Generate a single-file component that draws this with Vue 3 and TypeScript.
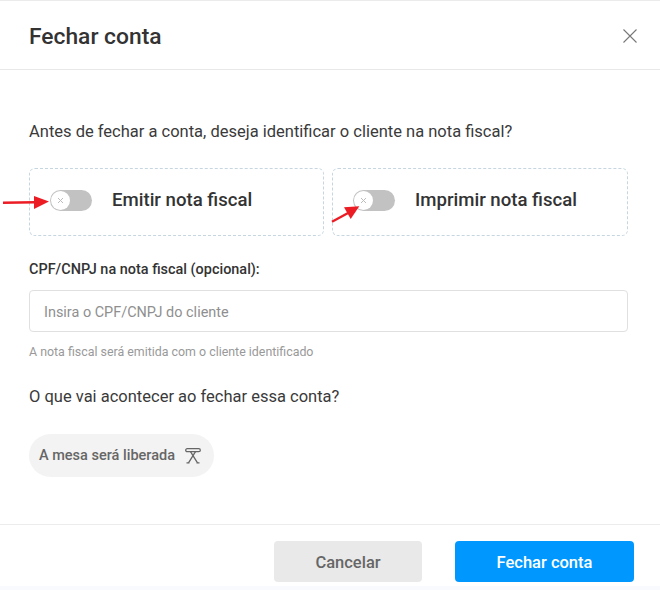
<script setup lang="ts">
const options = [
  { id: 'emitir', label: 'Emitir nota fiscal' },
  { id: 'imprimir', label: 'Imprimir nota fiscal' },
]
</script>

<template>
  <div class="modal">
    <header class="head">
      <h1>Fechar conta</h1>
      <button class="close" aria-label="Fechar">
        <svg width="14" height="14" viewBox="0 0 14 14"><path d="M0.5 0.5l13 13M13.5 0.5l-13 13" stroke="#777" stroke-width="1.1" fill="none" /></svg>
      </button>
    </header>
    <main class="body">
      <p class="question">Antes de fechar a conta, deseja identificar o cliente na nota fiscal?</p>
      <div class="options">
        <div v-for="o in options" :key="o.id" class="option" :class="o.id">
          <span class="toggle">
            <span class="knob">
              <svg width="7" height="7" viewBox="0 0 7 7"><path d="M1 1l5 5M6 1L1 6" stroke="#bdbdbd" stroke-width="1" fill="none" /></svg>
            </span>
          </span>
          <span class="label">{{ o.label }}</span>
          <svg v-if="o.id === 'emitir'" class="arrow arrow-a" width="48" height="18" viewBox="0 0 48 18">
            <path d="M0 8.7 L32 8.3" stroke="#ec1c24" stroke-width="2.4" fill="none" />
            <path d="M31 2 L46 7.5 L31 15 Z" fill="#ec1c24" />
          </svg>
          <svg v-else class="arrow arrow-b" width="32" height="30" viewBox="0 0 32 30">
            <path d="M1 24.7 L18 15.5" stroke="#ec1c24" stroke-width="2.4" fill="none" />
            <path d="M28.3 9.2 L13 10.2 L19.7 22 Z" fill="#ec1c24" />
          </svg>
        </div>
      </div>
      <label class="field-label" for="doc">CPF/CNPJ na nota fiscal (opcional):</label>
      <input id="doc" class="field" placeholder="Insira o CPF/CNPJ do cliente" />
      <p class="hint">A nota fiscal será emitida com o cliente identificado</p>
      <p class="what">O que vai acontecer ao fechar essa conta?</p>
      <div class="pill">
        <span>A mesa será liberada</span>
        <svg width="16" height="16" viewBox="0 0 16 16" fill="none" stroke="#666" stroke-width="1.3">
          <rect x="0.7" y="0.7" width="14.6" height="3" rx="1.5" />
          <path d="M5.5 3.7L12.5 14.8M10.5 3.7L3.5 14.8M1.5 14.8h3M11.5 14.8h3" />
        </svg>
      </div>
    </main>
    <footer class="foot">
      <button class="btn cancel">Cancelar</button>
      <button class="btn primary">Fechar conta</button>
    </footer>
  </div>
</template>

<style>
html, body { margin: 0; background: #f8fafd; }
</style>

<style scoped>
.modal {
  width: 660px;
  height: 586px;
  background: #fff;
  border-top: 1px solid #ebebeb;
  box-sizing: border-box;
  display: flex;
  flex-direction: column;
  font-family: Roboto, sans-serif;
  color: #333;
}
.head {
  height: 69px;
  flex: none;
  box-sizing: border-box;
  border-bottom: 1px solid #e8e8e8;
  padding: 2px 23px 0 29px;
  display: flex;
  align-items: center;
  justify-content: space-between;
}
h1 { margin: 0; font-size: 22.8px; font-weight: 500; color: #333; }
.close { border: 0; background: none; padding: 0; display: flex; }
.body { flex: 1; padding: 0 32px 0 29px; }
.question { margin: 52px 0 0; font-size: 16.5px; line-height: 19px; color: #3a3a3a; }
.options { display: flex; gap: 8px; margin-top: 27px; }
.option {
  position: relative;
  height: 68px;
  box-sizing: border-box;
  border: 1px dashed #c6d6e0;
  border-radius: 6px;
  display: flex;
  align-items: center;
  padding: 0 0 3px 20px;
}
.emitir { width: 295px; }
.imprimir { width: 296px; }
.toggle {
  width: 42px;
  height: 21px;
  border-radius: 11px;
  background: #c2c2c2;
  display: flex;
  align-items: center;
  padding-left: 1px;
  box-sizing: border-box;
  flex: none;
}
.knob {
  width: 19px;
  height: 19px;
  border-radius: 50%;
  background: #fff;
  display: flex;
  align-items: center;
  justify-content: center;
}
.label { margin: 0 0 2px 20px; font-size: 18.6px; font-weight: 500; color: #333; }
.arrow { position: absolute; }
.arrow-a { left: -27px; top: 25px; }
.arrow-b { left: -2px; top: 28px; }
.field-label { display: block; margin-top: 26px; font-size: 14.45px; line-height: 16px; font-weight: 500; color: #333; }
.field {
  display: block;
  margin-top: 12px;
  width: 100%;
  height: 42px;
  box-sizing: border-box;
  border: 1px solid #e0e0e0;
  border-radius: 4px;
  padding: 2px 14px 0;
  font: 14.45px Roboto, sans-serif;
}
.field::placeholder { color: #8f8f8f; opacity: 1; }
.hint { margin: 13px 0 0; font-size: 12.4px; line-height: 14px; color: #999; }
.what { margin: 28px 0 0; font-size: 16.5px; line-height: 19px; color: #3a3a3a; }
.pill {
  margin-top: 28px;
  width: fit-content;
  height: 43px;
  border-radius: 22px;
  background: #f3f3f3;
  display: flex;
  align-items: center;
  gap: 10px;
  padding: 0 13px 0 10px;
  font-size: 14.5px;
  font-weight: 500;
  color: #666;
}
.foot {
  height: 62px;
  flex: none;
  border-top: 1px solid #ececec;
  box-sizing: border-box;
  padding: 16px 26px 0 274px;
  display: flex;
  gap: 33px;
}
.btn {
  height: 41px;
  border: 0;
  border-radius: 4px;
  padding: 1px 0 0;
  font: 500 16.5px Roboto, sans-serif;
}
.cancel { width: 148px; background: #e9e9e9; color: #666; }
.primary { width: 179px; background: #0098ff; color: #fff; }
</style>
